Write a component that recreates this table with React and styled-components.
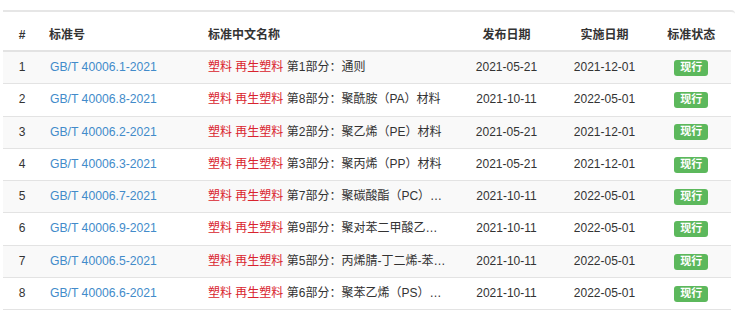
import React from "react";
import styled, { createGlobalStyle } from "styled-components";

const GlobalStyle = createGlobalStyle`
  body {
    margin: 0;
    background: #fff;
    font-family: "Liberation Sans", "Noto Sans CJK SC", sans-serif;
    color: #333;
  }
`;

const ROWS = [
  { id: 1, code: "GB/T 40006.1-2021", part: "第1部分：通则", pub: "2021-05-21", impl: "2021-12-01" },
  { id: 2, code: "GB/T 40006.8-2021", part: "第8部分：聚酰胺（PA）材料", pub: "2021-10-11", impl: "2022-05-01" },
  { id: 3, code: "GB/T 40006.2-2021", part: "第2部分：聚乙烯（PE）材料", pub: "2021-05-21", impl: "2021-12-01" },
  { id: 4, code: "GB/T 40006.3-2021", part: "第3部分：聚丙烯（PP）材料", pub: "2021-05-21", impl: "2021-12-01" },
  { id: 5, code: "GB/T 40006.7-2021", part: "第7部分：聚碳酸酯（PC）材料", pub: "2021-10-11", impl: "2022-05-01" },
  { id: 6, code: "GB/T 40006.9-2021", part: "第9部分：聚对苯二甲酸乙二醇酯（PET）材料", pub: "2021-10-11", impl: "2022-05-01" },
  { id: 7, code: "GB/T 40006.5-2021", part: "第5部分：丙烯腈-丁二烯-苯乙烯（ABS）材料", pub: "2021-10-11", impl: "2022-05-01" },
  { id: 8, code: "GB/T 40006.6-2021", part: "第6部分：聚苯乙烯（PS）材料", pub: "2021-10-11", impl: "2022-05-01" },
];

const Page = styled.div`
  padding: 10px 0 0 3px;
`;

const Panel = styled.div`
  width: 732px;
  border-top: 2px solid #e6e6e6;
  border-top-right-radius: 4px;
`;

const Table = styled.table`
  width: 728px;
  table-layout: fixed;
  border-collapse: collapse;
  font-size: 12px;
`;

const Th = styled.th`
  padding: 14px 8px 6px;
  line-height: 18px;
  font-weight: bold;
  text-align: ${(p) => p.align || "left"};
  vertical-align: bottom;
  border-bottom: 2px solid #e3e3e3;
  white-space: nowrap;
`;

const Row = styled.tr`
  background: ${(p) => (p.striped ? "#f9f9f9" : "#fff")};
`;

const Td = styled.td`
  padding: 7px 8px 7px ${(p) => p.indent || 8}px;
  line-height: 17.3px;
  text-align: ${(p) => p.align || "left"};
  border-top: 1px solid #e3e3e3;
  border-bottom: 1px solid #e3e3e3;
  white-space: nowrap;
  overflow: hidden;
  text-overflow: ellipsis;
`;

const Code = styled.a`
  color: #428bca;
  text-decoration: none;
  font-size: 12.2px;
`;

const Tag = styled.span`
  color: #d9232d;
`;

const Label = styled.span`
  display: inline-block;
  padding: 2px 6px 3px;
  font-size: 11px;
  line-height: 11px;
  font-weight: bold;
  color: #fff;
  background: #5cb85c;
  border-radius: 3px;
  vertical-align: middle;
`;

export default function App() {
  return (
    <Page>
      <GlobalStyle />
      <Panel>
        <Table>
          <colgroup>
            <col style={{ width: 38 }} />
            <col style={{ width: 159 }} />
            <col style={{ width: 255.5 }} />
            <col style={{ width: 102 }} />
            <col style={{ width: 94 }} />
            <col style={{ width: 79.5 }} />
          </colgroup>
          <thead>
            <tr>
              <Th align="center">#</Th>
              <Th>标准号</Th>
              <Th>标准中文名称</Th>
              <Th align="center">发布日期</Th>
              <Th align="center">实施日期</Th>
              <Th align="center">标准状态</Th>
            </tr>
          </thead>
          <tbody>
            {ROWS.map((r, i) => (
              <Row key={r.id} striped={i % 2 === 0}>
                <Td align="center">{r.id}</Td>
                <Td indent={9}>
                  <Code href="#">{r.code}</Code>
                </Td>
                <Td>
                  <Tag>塑料</Tag> <Tag>再生塑料</Tag> {r.part}
                </Td>
                <Td align="center">{r.pub}</Td>
                <Td align="center">{r.impl}</Td>
                <Td align="center">
                  <Label>现行</Label>
                </Td>
              </Row>
            ))}
          </tbody>
        </Table>
      </Panel>
    </Page>
  );
}
